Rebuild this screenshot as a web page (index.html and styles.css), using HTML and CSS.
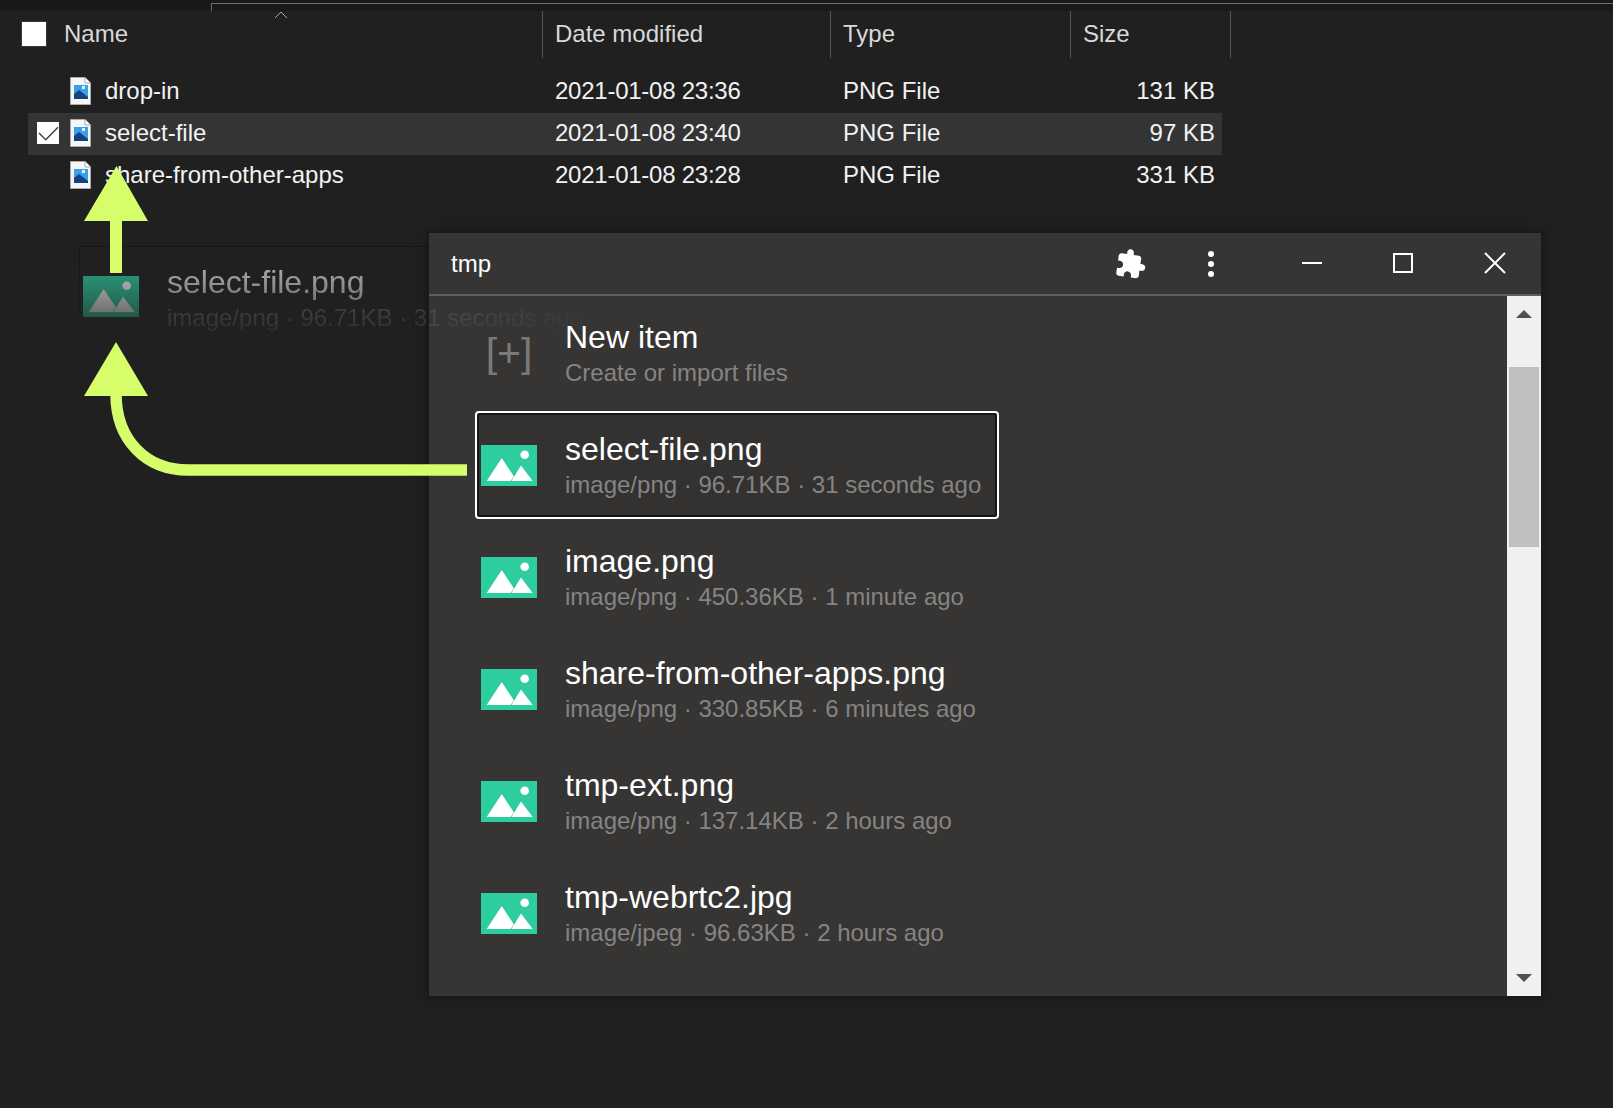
FILE: index.html
```html
<!DOCTYPE html>
<html lang="en">
<head>
  <meta charset="UTF-8">
  <title>tmp</title>
  <link rel="stylesheet" href="styles.css">
</head>
<body>

  <svg width="0" height="0" class="defs">
    <symbol id="png-icon" viewBox="0 0 21 28">
      <path d="M0.5 0.5H15L20.5 6V27.5H0.5Z" fill="#f4f6f8" stroke="#a9a9a9"/>
      <path d="M15 0.5V6H20.5" fill="#fff" stroke="#a9a9a9"/>
      <rect x="4" y="8" width="14" height="14" fill="#3aa0ea"/>
      <path d="M4 22V17L9 13L18 20V22Z" fill="#16427f"/>
      <rect x="12" y="9" width="3" height="3" fill="#e8f4fd"/>
    </symbol>
    <symbol id="image-icon" viewBox="0 0 56 41">
      <rect width="56" height="41" fill="#2dcd9f"/>
      <path d="M5.700 36L20.700 13L33 31.500L29.500 36Z" fill="#fff"/>
      <path d="M30.500 36L40 20.500L51.700 36Z" fill="#fff"/>
      <circle cx="43.700" cy="9.700" r="4.300" fill="#fff"/>
    </symbol>
  </svg>

  <div class="topbar"><div class="search-edge"></div></div>

  <div class="explorer">
    <div class="col-head">
      <div class="head-cell head-name">
        <span class="head-check"></span>
        <span>Name</span>
        <svg class="sort-caret" width="14" height="8" viewBox="0 0 14 8"><path d="M1 7L7 1L13 7" fill="none" stroke="#a8a8a8"/></svg>
      </div>
      <div class="head-cell head-date">Date modified</div>
      <div class="head-cell head-type">Type</div>
      <div class="head-cell head-size">Size</div>
    </div>

    <div class="file-row">
      <span class="check-slot"></span>
      <svg class="png-icon"><use href="#png-icon"/></svg>
      <span class="file-name">drop-in</span>
      <span class="file-date">2021-01-08 23:36</span>
      <span class="file-type">PNG File</span>
      <span class="file-size">131 KB</span>
    </div>
    <div class="file-row selected">
      <span class="check-slot">
        <svg class="row-check" width="22" height="22" viewBox="0 0 22 22"><rect width="22" height="22" fill="#fff"/><path d="M2 11L8.700 17.700L21 5.300" fill="none" stroke="#444" stroke-width="1.500"/></svg>
      </span>
      <svg class="png-icon"><use href="#png-icon"/></svg>
      <span class="file-name">select-file</span>
      <span class="file-date">2021-01-08 23:40</span>
      <span class="file-type">PNG File</span>
      <span class="file-size">97 KB</span>
    </div>
    <div class="file-row">
      <span class="check-slot"></span>
      <svg class="png-icon"><use href="#png-icon"/></svg>
      <span class="file-name">share-from-other-apps</span>
      <span class="file-date">2021-01-08 23:28</span>
      <span class="file-type">PNG File</span>
      <span class="file-size">331 KB</span>
    </div>
  </div>

  <div class="window">
    <div class="titlebar">
      <span class="win-title">tmp</span>
      <svg class="puzzle" width="32" height="32" viewBox="0 0 24 24"><path fill="#fff" d="M20.500 11H19V7c0-1.100-.9-2-2-2h-4V3.500C13 2.120 11.880 1 10.500 1S8 2.120 8 3.500V5H4c-1.100 0-1.990.9-1.990 2v3.800H3.500c1.490 0 2.700 1.210 2.700 2.700s-1.210 2.700-2.700 2.700H2V20c0 1.100.9 2 2 2h3.800v-1.500c0-1.490 1.210-2.700 2.700-2.700 1.490 0 2.700 1.210 2.700 2.700V22H17c1.100 0 2-.9 2-2v-4h1.500c1.380 0 2.500-1.120 2.500-2.500S21.880 11 20.500 11z"/></svg>
      <svg class="kebab" width="8" height="28" viewBox="0 0 8 28"><circle cx="4" cy="4" r="3" fill="#fff"/><circle cx="4" cy="14" r="3" fill="#fff"/><circle cx="4" cy="24" r="3" fill="#fff"/></svg>
      <svg class="win-btn min" width="20" height="20" viewBox="0 0 20 20"><path d="M0 10H20" stroke="#fff" stroke-width="2"/></svg>
      <svg class="win-btn max" width="20" height="20" viewBox="0 0 20 20"><rect x="1" y="1" width="18" height="18" fill="none" stroke="#fff" stroke-width="2"/></svg>
      <svg class="win-btn close" width="22" height="22" viewBox="0 0 22 22"><path d="M1 1L21 21M21 1L1 21" stroke="#fff" stroke-width="2"/></svg>
    </div>
    <div class="win-body">
      <div class="item-list">
        <div class="item">
          <div class="new-icon">[+]</div>
          <div class="item-text">
            <div class="item-name">New item</div>
            <div class="item-sub">Create or import files</div>
          </div>
        </div>
        <div class="item focused">
          <svg class="image-icon"><use href="#image-icon"/></svg>
          <div class="item-text">
            <div class="item-name">select-file.png</div>
            <div class="item-sub">image/png · 96.71KB · 31 seconds ago</div>
          </div>
        </div>
        <div class="item">
          <svg class="image-icon"><use href="#image-icon"/></svg>
          <div class="item-text">
            <div class="item-name">image.png</div>
            <div class="item-sub">image/png · 450.36KB · 1 minute ago</div>
          </div>
        </div>
        <div class="item">
          <svg class="image-icon"><use href="#image-icon"/></svg>
          <div class="item-text">
            <div class="item-name">share-from-other-apps.png</div>
            <div class="item-sub">image/png · 330.85KB · 6 minutes ago</div>
          </div>
        </div>
        <div class="item">
          <svg class="image-icon"><use href="#image-icon"/></svg>
          <div class="item-text">
            <div class="item-name">tmp-ext.png</div>
            <div class="item-sub">image/png · 137.14KB · 2 hours ago</div>
          </div>
        </div>
        <div class="item">
          <svg class="image-icon"><use href="#image-icon"/></svg>
          <div class="item-text">
            <div class="item-name">tmp-webrtc2.jpg</div>
            <div class="item-sub">image/jpeg · 96.63KB · 2 hours ago</div>
          </div>
        </div>
      </div>
      <div class="scrollbar">
        <svg class="scroll-arrow" width="16" height="8" viewBox="0 0 16 8"><path d="M8 0L16 8H0Z" fill="#505050"/></svg>
        <div class="scroll-track"><div class="scroll-thumb"></div></div>
        <svg class="scroll-arrow" width="16" height="8" viewBox="0 0 16 8"><path d="M0 0H16L8 8Z" fill="#505050"/></svg>
      </div>
    </div>
  </div>

  <div class="ghost">
    <svg class="image-icon"><use href="#image-icon"/></svg>
    <div class="ghost-text">
      <div class="ghost-name">select-file.png</div>
      <div class="ghost-sub">image/png · 96.71KB · 31 seconds ago</div>
    </div>
  </div>

  <svg class="arrows" width="500" height="500" viewBox="0 0 500 500">
    <path d="M116.500 166L148 221H122V273H110V221H84Z" fill="#d6fd6a"/>
    <path d="M116 342L148 396H84Z" fill="#d6fd6a"/>
    <path d="M116 394C116 440 146 470 188 470H467" fill="none" stroke="#d6fd6a" stroke-width="11.500"/>
  </svg>

</body>
</html>
```

FILE: styles.css
```css
* {
  box-sizing: border-box;
}
html, body {
  height: 100%;
}
body {
  margin: 0;
  background: #202020;
  font-family: "Liberation Sans", Arial, sans-serif;
  color: #fff;
  overflow: hidden;
}
.defs {
  position: absolute;
}
.topbar {
  height: 11px;
  background: #191919;
  padding: 3px 0 0 211px;
}
.search-edge {
  height: 8px;
  border-top: 1px solid #6b6b6b;
  border-left: 1px solid #6b6b6b;
}

/* explorer list */
.col-head {
  display: flex;
  height: 47px;
  margin-bottom: 13px;
  font-size: 24px;
  color: #d9d9d9;
}
.head-cell {
  display: flex;
  align-items: center;
  padding: 0 0 2px 12px;
  border-right: 1px solid #555;
}
.head-name {
  position: relative;
  width: 543px;
  padding-left: 22px;
  gap: 18px;
}
.head-date {
  width: 288px;
}
.head-type {
  width: 240px;
}
.head-size {
  width: 160px;
}
.head-check {
  width: 24px;
  height: 24px;
  background: #fff;
  outline: 1px solid #3a3a3a;
}
.sort-caret {
  position: absolute;
  left: 274px;
  top: 0;
}
.file-row {
  display: flex;
  align-items: center;
  height: 42px;
  padding-bottom: 2px;
  margin-left: 28px;
  width: 1194px;
  font-size: 24px;
  color: #f2f2f2;
}
.file-row.selected {
  background: #343434;
}
.check-slot {
  display: flex;
  width: 42px;
  padding-left: 9px;
}
.png-icon {
  width: 21px;
  height: 28px;
  flex: none;
}
.file-name {
  width: 464px;
  padding-left: 14px;
}
.file-date {
  width: 288px;
  letter-spacing: -0.25px;
}
.file-type {
  width: 200px;
}
.file-size {
  width: 172px;
  text-align: right;
}

/* app window */
.window {
  position: absolute;
  left: 429px;
  top: 233px;
  width: 1112px;
  height: 763px;
  display: flex;
  flex-direction: column;
  background: #363533;
  box-shadow: 0 0 2px 2px #1a1a1a, 0 0 16px rgba(0, 0, 0, 0.2);
}
.titlebar {
  height: 63px;
  flex: none;
  border-bottom: 2px solid #5e5e5c;
  display: flex;
  align-items: center;
  padding-left: 22px;
}
.win-title {
  font-size: 24px;
}
.puzzle {
  margin-left: 624px;
  transform: rotate(8deg);
}
.kebab {
  margin-left: 60px;
}
.win-btn {
  margin-bottom: 2px;
}
.min {
  margin-left: 87px;
}
.max {
  margin-left: 71px;
}
.close {
  margin-left: 71px;
}
.win-body {
  flex: 1;
  display: flex;
  min-height: 0;
}
.item-list {
  flex: 1;
  padding: 3px 0 0 46px;
}
.item {
  display: flex;
  align-items: center;
  width: 524px;
  height: 108px;
  margin-bottom: 4px;
  padding-left: 6px;
  gap: 28px;
}
.item.focused {
  padding-left: 4px;
  background: #333231;
  border: 2px solid #fff;
  border-radius: 4px;
  box-shadow: inset 0 0 0 2px #161616;
}
.image-icon {
  width: 56px;
  height: 41px;
  flex: none;
}
.new-icon {
  width: 56px;
  font-size: 41px;
  font-weight: 300;
  text-align: center;
  color: #7b7a78;
}
.item-text {
  margin-top: 3px;
  white-space: nowrap;
}
.item-name {
  font-size: 32px;
  line-height: 37px;
}
.item-sub {
  font-size: 24px;
  line-height: 34px;
  color: #858483;
}

/* scrollbar */
.scrollbar {
  width: 34px;
  background: #f0f0f0;
  display: flex;
  flex-direction: column;
  align-items: center;
  padding: 14px 0;
}
.scroll-track {
  flex: 1;
  width: 100%;
  padding: 49px 2px 0;
}
.scroll-thumb {
  height: 180px;
  background: #c0c0c0;
}

/* drag image, sits over everything */
.ghost {
  position: absolute;
  left: 79px;
  top: 246px;
  width: 520px;
  height: 86px;
  padding: 20px 0 0 4px;
  display: flex;
  gap: 28px;
  align-items: center;
  white-space: nowrap;
  -webkit-mask-image: linear-gradient(to bottom, rgba(0, 0, 0, 0.9), rgba(0, 0, 0, 0.2));
  mask-image: linear-gradient(to bottom, rgba(0, 0, 0, 0.9), rgba(0, 0, 0, 0.2));
}
.ghost::before {
  content: "";
  position: absolute;
  left: 0;
  top: 0;
  width: 350px;
  height: 100%;
  border-top: 1px solid rgba(0, 0, 0, 0.3);
  border-left: 1px solid rgba(0, 0, 0, 0.3);
}
.ghost .image-icon {
  margin-top: -5px;
}
.ghost-name {
  font-size: 32px;
  line-height: 37px;
  color: #dedede;
}
.ghost-sub {
  font-size: 24px;
  line-height: 34px;
  color: #6e6e6e;
  -webkit-mask-image: linear-gradient(to right, #000 65%, rgba(0, 0, 0, 0.2) 100%);
  mask-image: linear-gradient(to right, #000 65%, rgba(0, 0, 0, 0.2) 100%);
}
.arrows {
  position: absolute;
  left: 0;
  top: 0;
}
```
